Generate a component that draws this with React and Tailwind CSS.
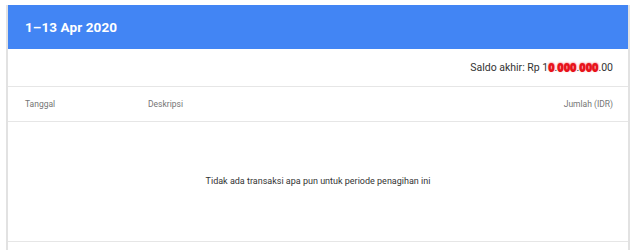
const Redact = ({ children }) => (
  <span className="text-[#e8131b] font-black text-[11px] leading-none [text-shadow:0_0_2px_#e8131b,0_1px_0_#e8131b]">{children}</span>
);

const App = () => {
  return (
    <div className="w-[640px] h-[250px] bg-white overflow-hidden pt-[5px] pl-[6px] font-['Roboto','Liberation_Sans',sans-serif]">
      <div className="w-[624px] h-[260px] border-x-2 border-[#e2e2e2] flex flex-col">
        {/* period header */}
        <div className="h-[44px] bg-[#4285f4] flex items-center pl-[17px]">
          <h1 className="text-white text-[13.5px] font-bold tracking-[0.1px]">1–13 Apr 2020</h1>
        </div>
        {/* closing balance */}
        <div className="h-[38px] flex items-center justify-end pr-[15px] border-b border-[#e6e6e6]">
          <span className="text-[10.5px] text-[#333]">
            Saldo akhir: Rp 1<Redact>0</Redact>.<Redact>000</Redact>.<Redact>000</Redact>.00
          </span>
        </div>
        {/* table head */}
        <div className="h-[35px] flex items-center text-[8.5px] text-[#757575] border-b border-[#e6e6e6] pl-[17px] pr-[15px]">
          <div className="w-[123px]">Tanggal</div>
          <div className="flex-1">Deskripsi</div>
          <div>Jumlah (IDR)</div>
        </div>
        {/* empty state */}
        <div className="h-[120px] flex items-center justify-center border-b border-[#e6e6e6]">
          <p className="text-[9px] text-[#333]">Tidak ada transaksi apa pun untuk periode penagihan ini</p>
        </div>
      </div>
    </div>
  );
};

export default App;
